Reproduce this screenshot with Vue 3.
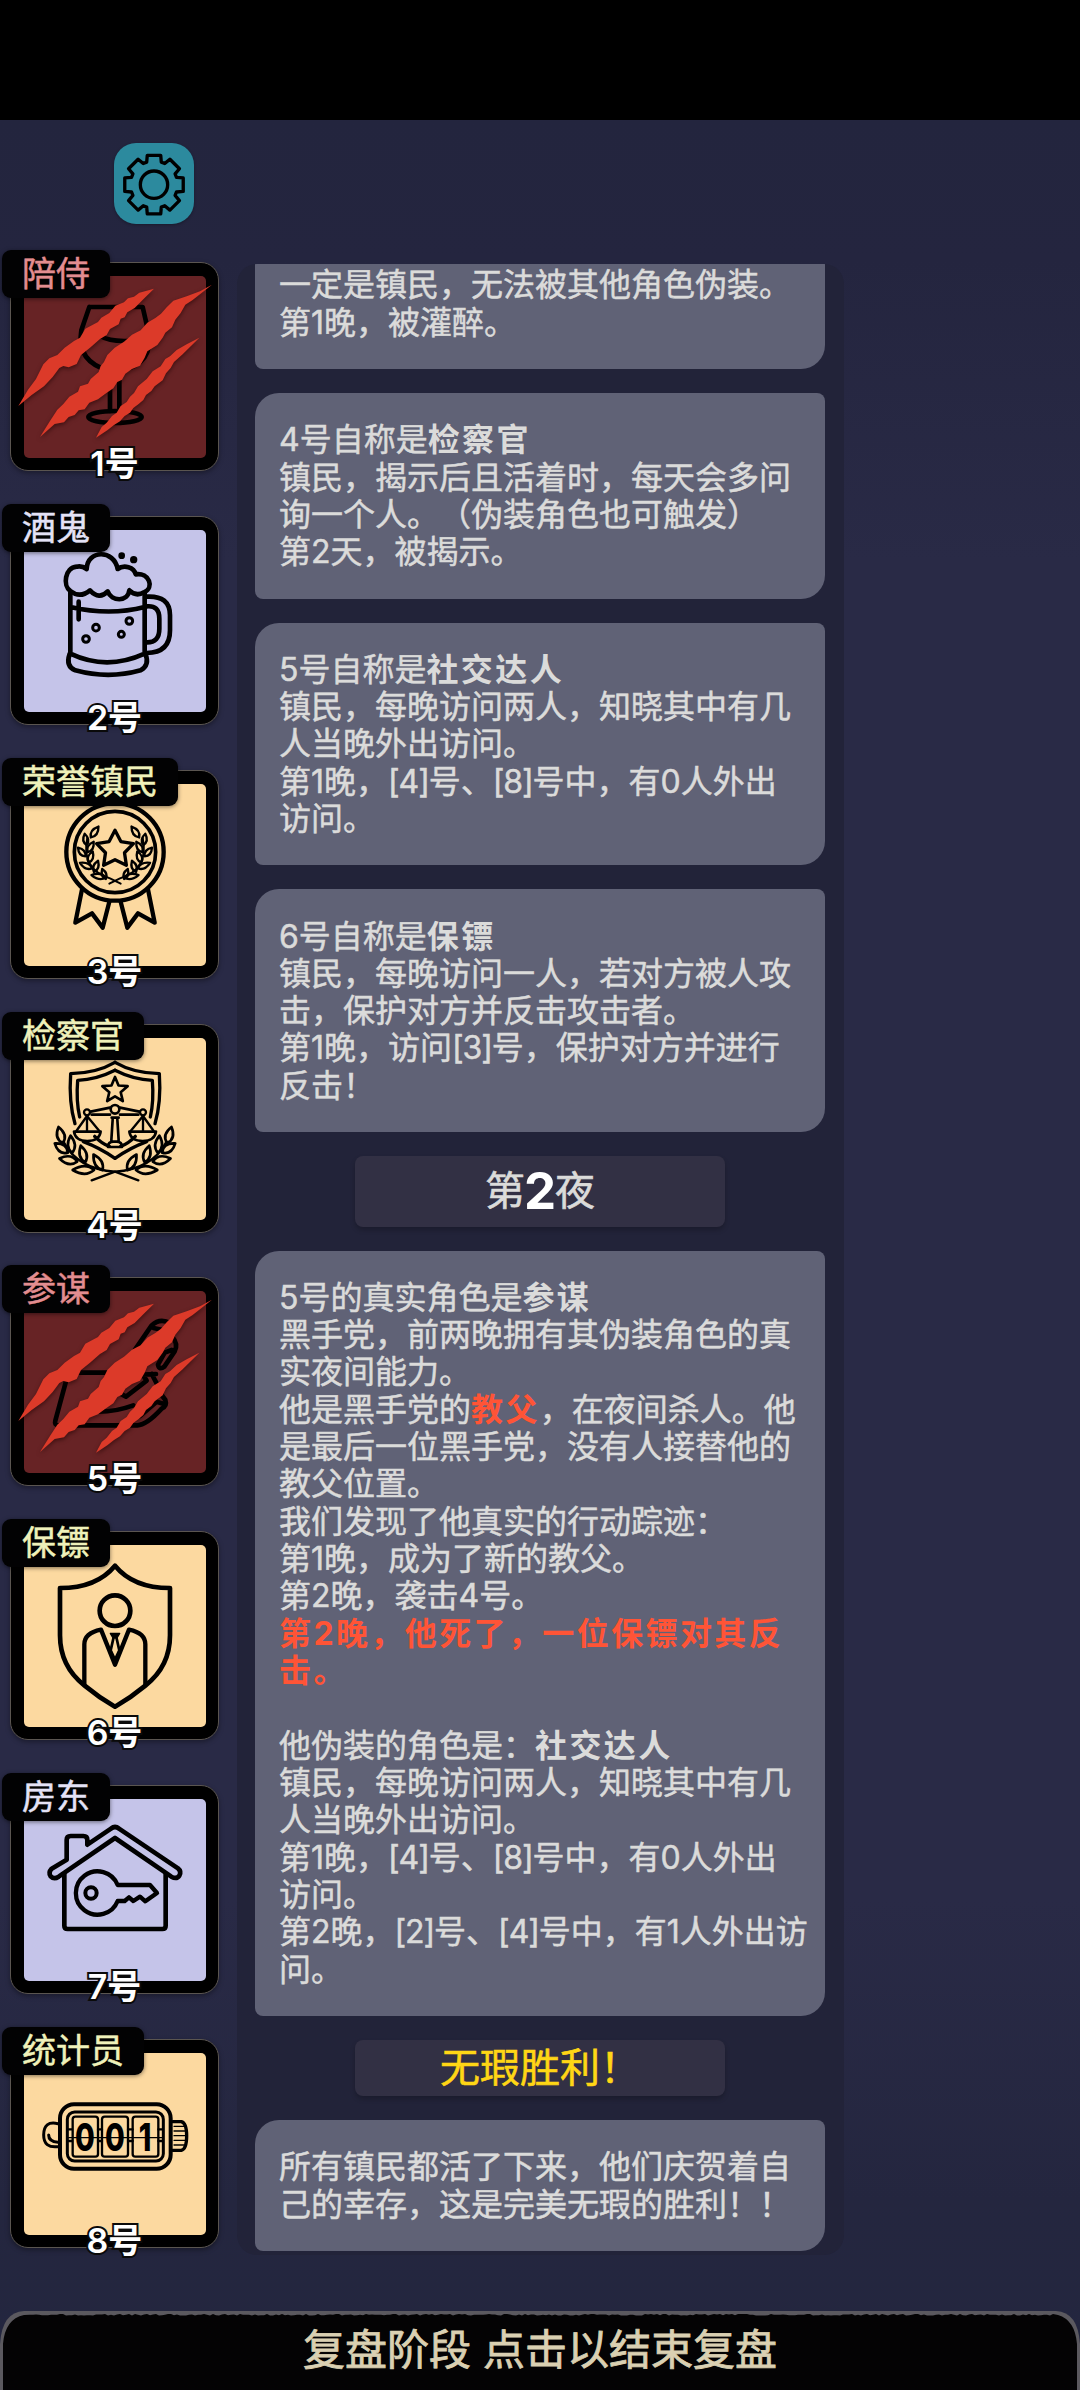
<script setup>
const players = [
  { id: 1, role: '陪侍', tone: 'mafia', icon: 'glass', dead: true, top: 527 },
  { id: 2, role: '酒鬼', tone: 'neutral', icon: 'beer', top: 119 },
  { id: 3, role: '荣誉镇民', tone: 'town', icon: 'medal', top: 129 },
  { id: 4, role: '检察官', tone: 'town', icon: 'justice', top: 111 },
  { id: 5, role: '参谋', tone: 'mafia', icon: 'adviser', dead: true, top: 123 },
  { id: 6, role: '保镖', tone: 'town', icon: 'guard', top: 104 },
  { id: 7, role: '房东', tone: 'neutral', icon: 'house', top: 115 },
  { id: 8, role: '统计员', tone: 'town', icon: 'counter', top: 126 },
]

// A line is a list of runs; a run is plain text or [text, style class].
const log = [
  { kind: 'card', cut: true, lines: [['一定是镇民，无法被其他角色伪装。'], ['第1晚，被灌醉。']] },
  {
    kind: 'card',
    lines: [
      ['4号自称是', ['检察官', 'strong']],
      ['镇民，揭示后且活着时，每天会多问'],
      ['询一个人。（伪装角色也可触发）'],
      ['第2天，被揭示。'],
    ],
  },
  {
    kind: 'card',
    lines: [
      ['5号自称是', ['社交达人', 'strong']],
      ['镇民，每晚访问两人，知晓其中有几'],
      ['人当晚外出访问。'],
      ['第1晚，', ['[4]', 'ref'], '号、', ['[8]', 'ref'], '号中，有0人外出'],
      ['访问。'],
    ],
  },
  {
    kind: 'card',
    lines: [
      ['6号自称是', ['保镖', 'strong']],
      ['镇民，每晚访问一人，若对方被人攻'],
      ['击，保护对方并反击攻击者。'],
      ['第1晚，访问', ['[3]', 'ref'], '号，保护对方并进行'],
      ['反击！'],
    ],
  },
  { kind: 'night', number: 2 },
  {
    kind: 'card',
    lines: [
      ['5号的真实角色是', ['参谋', 'strong']],
      ['黑手党，前两晚拥有其伪装角色的真'],
      ['实夜间能力。'],
      ['他是黑手党的', ['教父', 'strong danger'], '，在夜间杀人。他'],
      ['是最后一位黑手党，没有人接替他的'],
      ['教父位置。'],
      ['我们发现了他真实的行动踪迹：'],
      ['第1晚，成为了新的教父。'],
      ['第2晚，袭击4号。'],
      [['第2晚，他死了，一位保镖对其反', 'strong danger']],
      [['击。', 'strong danger']],
      [],
      ['他伪装的角色是：', ['社交达人', 'strong']],
      ['镇民，每晚访问两人，知晓其中有几'],
      ['人当晚外出访问。'],
      ['第1晚，', ['[4]', 'ref'], '号、', ['[8]', 'ref'], '号中，有0人外出'],
      ['访问。'],
      ['第2晚，', ['[2]', 'ref'], '号、', ['[4]', 'ref'], '号中，有1人外出访'],
      ['问。'],
    ],
  },
  { kind: 'victory', text: '无瑕胜利！' },
  { kind: 'card', lines: [['所有镇民都活了下来，他们庆贺着自'], ['己的幸存，这是完美无瑕的胜利！！']] },
]

const runText = (run) => (Array.isArray(run) ? run[0] : run)
const runClass = (run) => (Array.isArray(run) ? run[1] : '')

function star(cx, cy, outer, inner) {
  const pts = []
  for (let i = 0; i < 10; i++) {
    const r = i % 2 ? inner : outer
    const a = (Math.PI / 5) * i - Math.PI / 2
    pts.push(`${(cx + r * Math.cos(a)).toFixed(1)},${(cy + r * Math.sin(a)).toFixed(1)}`)
  }
  return pts.join(' ')
}

const leaf = (x, y, l, w, r) => ({
  d: `M${-l} 0Q${-l * 0.2} ${-w * 1.9} ${l} 0Q${-l * 0.2} ${w * 1.9} ${-l} 0Z`,
  t: `translate(${x} ${y}) rotate(${r})`,
})

const medalLeaves = [
  leaf(284, 273, 20, 9, -55), leaf(257, 295, 17, 8, -100), leaf(272, 318, 18, 8, -60),
  leaf(245, 333, 17, 8, -130), leaf(272, 348, 18, 8, -70), leaf(258, 374, 20, 8, -155),
  leaf(288, 376, 18, 8, -70), leaf(296, 406, 22, 8, -170), leaf(312, 399, 16, 7, -110),
]
const justiceLeaves = [
  leaf(182, 402, 25, 12, -105), leaf(184, 441, 24, 12, -145), leaf(214, 430, 26, 11, -95),
  leaf(205, 477, 27, 12, -170), leaf(249, 459, 26, 11, -105), leaf(250, 507, 32, 12, -180),
  leaf(294, 484, 27, 11, -120),
]

function gear(cx, cy) {
  const p = []
  for (let i = 0; i < 8; i++) {
    const b = i * 45
    for (const [r, o] of [[71, -18], [90, -13], [90, 13], [71, 18]]) {
      const a = ((b + o - 90) * Math.PI) / 180
      p.push(`${(cx + r * Math.cos(a)).toFixed(1)},${(cy + r * Math.sin(a)).toFixed(1)}`)
    }
  }
  return p.join(' ')
}

// Worn upper edge of the bottom bar.
function tornEdge() {
  let d = 'M3 80V34Q5 9 24 5'
  let seed = 7
  for (let x = 30; x < 1056; x += 3) {
    seed = (seed * 73 + 41) % 997
    d += `L${x} ${(4 + (seed % 5) * 0.4).toFixed(1)}`
  }
  return d + 'L1058 5Q1075 10 1077 34V80Z'
}
</script>

<template>
  <div class="screen">
    <div class="status-bar"></div>
    <header class="top">
      <button class="settings" aria-label="设置">
        <svg viewBox="342 129 240 240">
          <g fill="none" stroke="#000" stroke-width="10" stroke-linejoin="round">
            <polygon :points="gear(462, 251)" />
            <circle cx="462" cy="251" r="41" />
          </g>
        </svg>
      </button>
    </header>

    <main class="board">
      <aside class="players">
        <div v-for="p in players" :key="p.id" class="slot">
          <div class="frame">
            <div class="face" :class="p.tone">
              <svg class="art" :viewBox="`72 ${p.top} 546 546`">
                <g v-if="p.icon === 'glass'" class="ink" stroke-width="14">
                  <path d="M268 620H428L444 690Q466 792 358 812V932M268 620L244 690Q228 785 330 812V932M303 708Q325 722 372 722Q410 724 445 700" />
                  <ellipse cx="345" cy="950" rx="80" ry="18" />
                </g>

                <g v-else-if="p.icon === 'beer'" class="ink" stroke-width="14">
                  <path d="M211 302C188 286 194 232 230 229Q245 225 260 236C262 178 342 176 353 236C372 222 402 230 407 252C448 246 464 292 432 306Q408 320 388 300C384 336 334 334 323 303Q298 330 270 300Q240 325 211 302Z" />
                  <path d="M211 305V490M434 308V490M236 334V387M211 350Q330 377 434 350M211 490Q320 542 434 490M209 490Q196 528 226 540Q325 567 422 540Q450 524 436 490" />
                  <path d="M440 319Q510 315 510 375V420Q510 488 440 488M440 348Q478 344 478 385V415Q478 457 440 456" />
                  <g fill="#000" stroke="none">
                    <circle cx="365" cy="196" r="10" />
                    <circle cx="401" cy="208" r="11" />
                  </g>
                  <g stroke-width="9">
                    <circle cx="388" cy="392" r="10" /><circle cx="288" cy="412" r="10" />
                    <circle cx="364" cy="432" r="9" /><circle cx="258" cy="446" r="10" />
                  </g>
                </g>

                <g v-else-if="p.icon === 'medal'" class="ink" stroke-width="13">
                  <circle cx="345" cy="333" r="146" />
                  <circle cx="345" cy="333" r="122" stroke-width="11" />
                  <polygon :points="star(345, 326, 58, 30)" stroke-width="10" />
                  <g v-for="m in 2" :key="m" :transform="m === 2 ? 'matrix(-1 0 0 1 690 0)' : ''">
                    <path d="M246 445L226 545L276 517L308 560L328 482" />
                    <path v-for="(l, i) in medalLeaves" :key="i" :d="l.d" :transform="l.t" stroke-width="7" />
                    <path d="M262 290Q242 385 330 412L362 428" stroke-width="6" />
                  </g>
                </g>

                <g v-else-if="p.icon === 'justice'" class="ink" stroke-width="10">
                  <polygon :points="star(345, 268, 40, 18)" stroke-width="8" />
                  <g v-for="m in 2" :key="m" :transform="m === 2 ? 'matrix(-1 0 0 1 690 0)' : ''">
                    <path d="M345 184Q290 216 212 218Q206 305 225 368" />
                    <path d="M345 208Q290 236 233 238Q228 300 239 348" />
                    <path d="M250 422Q298 440 345 472M284 406Q305 428 328 436" />
                    <path d="M272 332L330 320M275 341H330" stroke-width="8" />
                    <circle cx="261" cy="334" r="9" stroke-width="7" />
                    <path d="M261 345L229 390M261 345L298 390M261 345V390" stroke-width="7" />
                    <path d="M222 392H302Q298 420 262 420Q226 420 222 392Z" stroke-width="8" />
                    <path v-for="(l, i) in justiceLeaves" :key="i" :d="l.d" :transform="l.t" stroke-width="8" />
                    <path d="M192 425Q235 505 345 512L415 538" stroke-width="7" />
                  </g>
                  <circle cx="345" cy="325" r="13" stroke-width="8" />
                  <path d="M335 350H356M338 355L334 418M352 355L356 418M324 438Q324 422 340 422H350Q366 422 366 438Z" stroke-width="8" />
                </g>

                <g v-else-if="p.icon === 'adviser'" class="ink" stroke-width="14">
                  <path d="M205 368H330M205 368L166 512Q162 526 176 526H412Q440 525 485 476Q502 468 496 450L474 420" />
                  <path d="M404 300L455 226Q480 202 512 220L520 228M460 234L500 242M515 258Q536 282 524 304L493 350Q478 362 474 344L494 308L515 300" />
                  <path d="M350 425L378 440L440 392L428 374L468 372M455 372L470 400M290 485Q345 486 400 466M420 498L470 455L492 462" />
                </g>

                <g v-else-if="p.icon === 'guard'" class="ink" stroke-width="14">
                  <path d="M345 166Q400 233 510 233V375Q510 468 437 525Q395 560 345 589Q295 560 253 525Q180 468 180 375V233Q290 233 345 166Z" />
                  <circle cx="345" cy="301" r="46" />
                  <path d="M253 522V402Q253 368 303 358L345 463L387 358Q436 368 436 402V522" stroke-width="13" />
                  <path d="M331 369H359L351 383H339Z" fill="#000" stroke-width="4" />
                  <path d="M340 385L332 420L345 448L358 420L350 385" stroke-width="8" />
                </g>

                <g v-else-if="p.icon === 'house'" class="ink" stroke-width="14">
                  <path d="M200 297L155 324Q144 336 152 347Q162 357 176 348L345 232L514 348Q530 357 538 345Q545 332 534 323L357 204Q345 194 333 204L262 252V238Q262 226 250 226H212Q200 226 200 238Z" />
                  <path d="M193 340V495Q193 505 203 505H487Q497 505 497 495V340" />
                  <path d="M353 373A65 65 0 1 0 353 421H374L387 410L400 421L420 408L436 422L471 397L450 373Z" stroke-width="13" />
                  <circle cx="273" cy="397" r="17" stroke-width="12" />
                </g>

                <g v-else class="ink" stroke-width="12">
                  <rect x="180" y="280" width="332" height="193" rx="42" />
                  <rect x="202" y="303" width="288" height="147" rx="22" stroke-width="9" />
                  <g stroke-width="7">
                    <rect x="218" y="317" width="76" height="120" rx="8" />
                    <rect x="306" y="317" width="78" height="120" rx="8" />
                    <rect x="398" y="317" width="77" height="120" rx="8" />
                    <path d="M206 355H216M206 390H216M294 355H306M294 390H306M384 355H398M384 390H398M475 355H486M475 390H486" />
                  </g>
                  <g class="reel" stroke="none" fill="#000">
                    <text transform="translate(255 421) scale(.74 1)">0</text>
                    <text transform="translate(345 421) scale(.74 1)">0</text>
                    <text transform="translate(435 421) scale(.74 1)">1</text>
                  </g>
                  <path d="M206 380H486" stroke-width="4" />
                  <path d="M174 338Q131 328 131 372Q131 412 174 407M146 372Q146 392 174 394" stroke-width="9" />
                  <path d="M518 332H544Q560 336 560 375Q560 414 544 418H518" stroke-width="10" />
                  <path d="M522 346H552M522 360H558M522 374H558M522 388H558M522 402H552" stroke-width="4" />
                </g>

                <g v-if="p.dead" class="claws" :transform="`translate(0 ${p.top - 527})`">
                  <path d="M462 565L418 577L402 589L384 594L372 606L346 616L328 638L304 652L294 665L256 685L240 712L222 722L194 742L172 764L148 774L130 792L108 836L84 868L55 917L95 884L132 858L158 830L178 803L190 797L206 801L230 791L243 764L270 742L300 716L320 704L330 686L356 672L362 655L374 651L382 636L404 623L430 597Z" />
                  <path d="M636 553L600 573L560 588L520 601L500 621L483 640L466 653L442 667L422 690L396 703L372 724L344 742L322 764L312 785L302 797L296 815L272 836L264 850L240 858L234 874L208 889L190 911L172 928L150 962L120 1010L164 971L192 966L206 950L224 944L236 930L254 927L268 907L294 897L314 882L340 864L352 845L366 838L376 820L396 806L420 796L434 772L442 753L472 734L488 712L496 697L516 681L526 658L542 638L556 613L578 599Z" />
                  <path d="M598 712L560 732L530 749L510 768L496 776L482 798L458 813L440 836L414 858L402 878L390 889L380 905L362 917L350 937L336 947L320 967L305 980L288 1012L322 990L342 974L360 963L374 947L390 937L400 923L416 911L430 899L438 884L454 872L464 858L488 840L498 819L512 803L522 785L548 762Z" />
                </g>
              </svg>
            </div>
            <span class="role" :class="p.tone">{{ p.role }}</span>
            <span class="number">{{ p.id }}号</span>
          </div>
        </div>
      </aside>

      <section class="log">
        <template v-for="(entry, i) in log" :key="i">
          <article v-if="entry.kind === 'card'" class="card" :class="{ cut: entry.cut }">
            <p v-for="(line, j) in entry.lines" :key="j">
              <span v-for="(run, k) in line" :key="k" :class="runClass(run)">{{ runText(run) }}</span>
            </p>
          </article>
          <div v-else-if="entry.kind === 'night'" class="banner night">
            <span>第</span><b>{{ entry.number }}</b><span>夜</span>
          </div>
          <div v-else class="banner victory">{{ entry.text }}</div>
        </template>
      </section>
    </main>

    <footer class="action">
      <svg class="edge" viewBox="0 0 1080 80">
        <path d="M0 80V34Q2 2 24 1H1056Q1078 2 1080 34V80Z" fill="#5b595f" />
        <path :d="tornEdge()" fill="#040304" />
      </svg>
      <span>复盘阶段 点击以结束复盘</span>
    </footer>
  </div>
</template>

<style>
body {
  background: #000;
}
</style>

<style scoped>
.screen {
  display: flex;
  flex-direction: column;
  width: 1080px;
  height: 2390px;
  overflow: hidden;
  background: linear-gradient(#23253e 120px, #24253f 260px, #292a46 560px, #292a46 1900px, #24263f 2200px, #23263f 100%);
  font-family: Inter, "Noto Sans CJK SC", sans-serif;
  text-spacing-trim: space-all;
}

.status-bar {
  flex: none;
  height: 120px;
  background: #000;
}

.top {
  flex: none;
  height: 130px;
  padding: 23px 0 0 114px;
  box-sizing: border-box;
}

.settings {
  display: block;
  width: 80px;
  height: 81px;
  padding: 0;
  border: 0;
  border-radius: 22px;
  background: #2c8a9e;
  box-shadow: 0 1px 3px rgba(0, 0, 0, 0.3);
}

.settings svg {
  display: block;
  width: 80px;
  height: 80px;
}

.board {
  display: flex;
  flex: none;
  height: 2060px;
}

.players {
  display: flex;
  flex-direction: column;
  width: 237px;
}

.slot {
  height: 253.86px;
  padding: 12px 0 0 10px;
  box-sizing: border-box;
}

.frame {
  position: relative;
  width: 209px;
  height: 209px;
  padding: 13px;
  box-sizing: border-box;
  border: 1px solid #5a5550;
  border-radius: 18px;
  background: #000;
  box-shadow: 0 2px 5px rgba(0, 0, 0, 0.35);
}

.face {
  width: 182px;
  height: 182px;
  border-radius: 5px;
}

.face.mafia { background: #672325; }
.face.neutral { background: #c5c4e9; }
.face.town { background: #fcd9a0; }

.art {
  display: block;
  width: 182px;
  height: 182px;
  overflow: visible;
}

.ink {
  fill: none;
  stroke: #000;
  stroke-linecap: round;
  stroke-linejoin: round;
}

.reel text {
  font-size: 116px;
  font-weight: 800;
  text-anchor: middle;
}

.claws {
  fill: #dc3a29;
  filter: drop-shadow(0 6px 6px rgba(30, 0, 0, 0.55));
}

.role {
  position: absolute;
  top: -13px;
  left: -9px;
  height: 48px;
  padding: 0 20px;
  border-radius: 9px;
  background: #020203;
  box-shadow: 0 1px 4px rgba(0, 0, 0, 0.5);
  font-size: 34px;
  line-height: 47px;
  white-space: nowrap;
  -webkit-text-stroke: 0.5px currentColor;
}

.role.mafia { color: #e38d90; }
.role.neutral { color: #e4e2f6; }
.role.town { color: #eff1ba; }

.number {
  position: absolute;
  left: 0;
  right: 0;
  bottom: -17px;
  color: #fff;
  font-size: 34px;
  font-weight: 600;
  line-height: 46px;
  text-align: center;
  -webkit-text-stroke: 4px #0a0a0a;
  paint-order: stroke fill;
}

.log {
  display: flex;
  flex-direction: column;
  justify-content: flex-end;
  align-items: center;
  gap: 24px;
  width: 607px;
  height: 1991px;
  margin-top: 14px;
  padding: 0 1px 4px 0;
  box-sizing: border-box;
  overflow: hidden;
  border-radius: 20px;
  background: #222339;
}

.card {
  flex: none;
  width: 570px;
  padding: 28.1px 0 28.1px 24px;
  box-sizing: border-box;
  border-radius: 24px 8px 24px 8px;
  background: #606276;
  color: #dbdbda;
}

.card.cut {
  padding-top: 60px;
}

.card p {
  height: 37.33px;
  margin: 0;
  font-size: 32px;
  line-height: 37.33px;
  white-space: nowrap;
  -webkit-text-stroke: 0.5px currentColor;
}

.strong {
  font-weight: 700;
  letter-spacing: 2.4px;
  -webkit-text-stroke: 0;
}

.danger {
  color: #ff5436;
}

.ref {
  letter-spacing: -1.1px;
}

.banner {
  display: flex;
  flex: none;
  justify-content: center;
  align-items: center;
  width: 370px;
  border-radius: 8px;
  background: #323044;
  box-shadow: 0 3px 5px rgba(0, 0, 0, 0.22);
  color: #dbdbda;
  font-size: 40px;
  line-height: 56px;
  -webkit-text-stroke: 0.6px currentColor;
}

.night { height: 70.5px; }

.night b {
  margin: 0 -1px;
  color: #fff;
  font-size: 51px;
  font-weight: 700;
  -webkit-text-stroke: 0;
}

.victory {
  height: 56px;
  color: #ffd615;
}

.action {
  position: relative;
  display: flex;
  flex: none;
  justify-content: center;
  height: 80px;
  color: #dad0b2;
  font-size: 42px;
  line-height: 79px;
  -webkit-text-stroke: 0.8px currentColor;
}

.edge {
  position: absolute;
  inset: 0;
  width: 1080px;
  height: 80px;
}

.action span {
  position: relative;
}
</style>
